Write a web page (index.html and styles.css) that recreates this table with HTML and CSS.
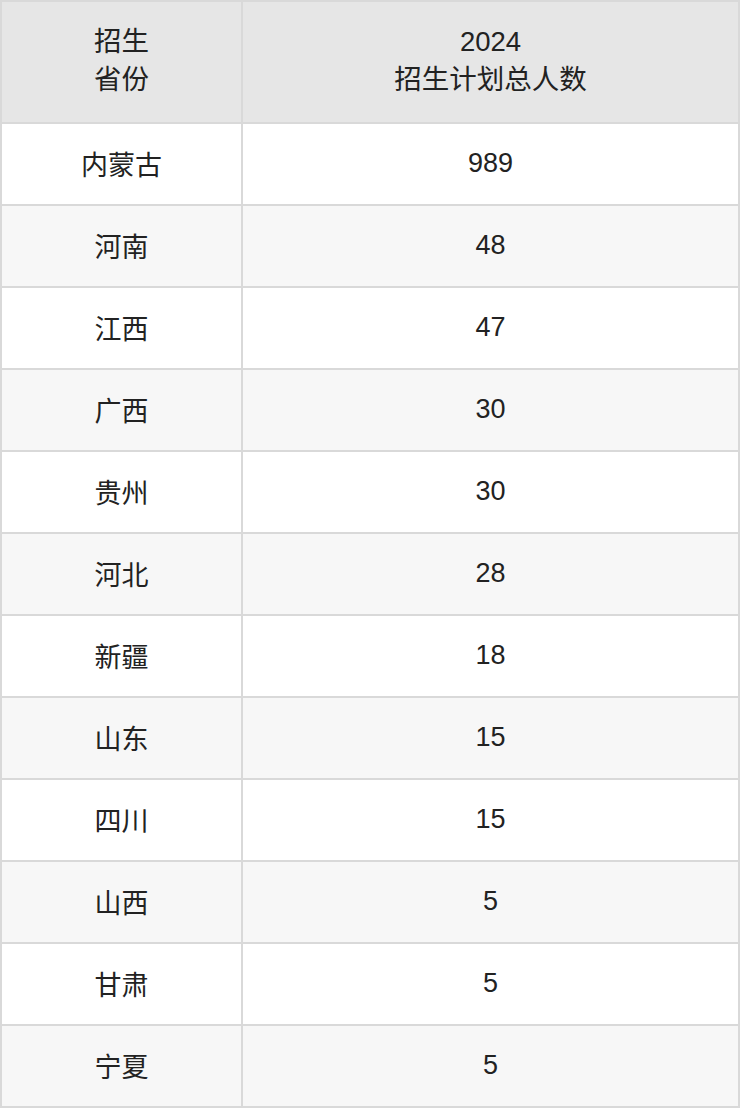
FILE: index.html
```html
<!DOCTYPE html>
<html lang="zh">
<head>
<meta charset="utf-8">
<link rel="stylesheet" href="styles.css">
</head>
<body>
<table class="plan">
  <thead>
    <tr><th class="c1">招生<br>省份</th><th>2024<br>招生计划总人数</th></tr>
  </thead>
  <tbody>
    <tr><td class="c1">内蒙古</td><td>989</td></tr>
    <tr><td class="c1">河南</td><td>48</td></tr>
    <tr><td class="c1">江西</td><td>47</td></tr>
    <tr><td class="c1">广西</td><td>30</td></tr>
    <tr><td class="c1">贵州</td><td>30</td></tr>
    <tr><td class="c1">河北</td><td>28</td></tr>
    <tr><td class="c1">新疆</td><td>18</td></tr>
    <tr><td class="c1">山东</td><td>15</td></tr>
    <tr><td class="c1">四川</td><td>15</td></tr>
    <tr><td class="c1">山西</td><td>5</td></tr>
    <tr><td class="c1">甘肃</td><td>5</td></tr>
    <tr><td class="c1">宁夏</td><td>5</td></tr>
  </tbody>
</table>
</body>
</html>
```
FILE: styles.css
```css
html, body {
  margin: 0;
  padding: 0;
  background: #ffffff;
}
.plan {
  width: 740px;
  border-collapse: separate;
  border-spacing: 2px;
  background: #d9d9d9;
  font-family: "Liberation Sans", "Noto Sans CJK SC", sans-serif;
  font-size: 27px;
  color: #222222;
  table-layout: fixed;
}
.plan th, .plan td {
  padding: 0;
  text-align: center;
  vertical-align: middle;
  font-weight: normal;
}
.plan th {
  height: 117px;
  padding-bottom: 3px;
  background: #e6e6e6;
  line-height: 38px;
  font-size: 27.5px;
}
.plan td {
  height: 79px;
  padding-bottom: 1px;
  background: #ffffff;
}
.plan tbody tr:nth-child(even) td {
  background: #f7f7f7;
}
.plan .c1 {
  width: 239px;
}
```
